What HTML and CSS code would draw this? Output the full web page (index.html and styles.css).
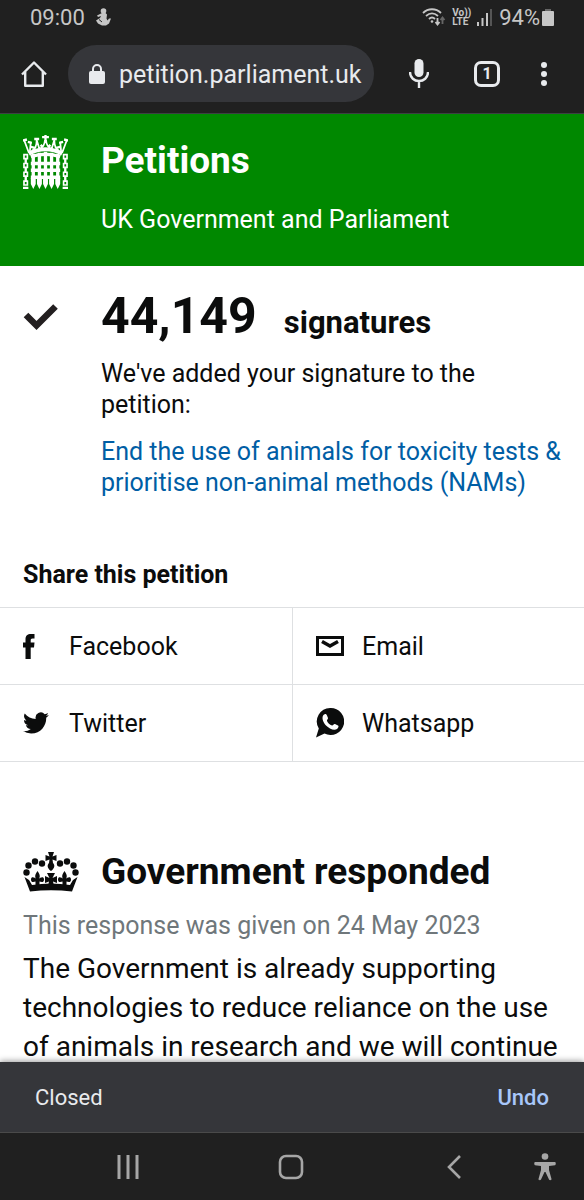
FILE: index.html
```html
<!DOCTYPE html>
<html lang="en-GB">

<head>
    <meta charset="UTF-8" />
    <meta name="viewport" content="width=device-width, initial-scale=1.0" />
    <title>Petitions - UK Government and Parliament</title>
    <link rel="stylesheet" href="styles.css">
</head>

<body>
    <!-- Status bar -->
    <div class="status-bar">
        <span class="clock">09:00</span>
        <svg width="16" height="18" viewBox="0 0 16 18" fill="#c6c6c6">
            <circle cx="8.500" cy="3" r="2.800" />
            <path d="M7 5L2 7.500l1 1.500 3-1-1 2-4 2.500 2 3 4 2h4l3-2 2-5h-2l-1.500 2-1-2 .5-4-2-2z" />
            <path d="M4 11.500l3 2.500" stroke="#202020" />
        </svg>
        <div class="status-icons">
            <svg width="24" height="18" viewBox="0 0 24 18" fill="none" stroke="#c6c6c6" stroke-width="1.800">
                <path d="M1 5c5-5 13-5 18 0M4 8c4-3.500 8-3.500 12 0M7 11c2-2 4-2 6 0" />
                <circle cx="10" cy="13.500" r="1.300" fill="#c6c6c6" stroke="none" />
                <path d="M15.500 10v6M13.500 14l2 2.500 2-2.500" />
                <path d="M20.500 16v-6M18.500 12l2-2.500 2 2.500" stroke="#666" />
            </svg>
            <span class="volte">Vo))<br>LTE</span>
            <svg width="16" height="17" viewBox="0 0 16 17" fill="#c6c6c6">
                <path d="M0 13h2v4H0zM4.500 9h2v8h-2zM9 4h2v13H9z" />
                <path d="M13 0h2v17h-2z" fill="#555" />
            </svg>
            <span class="battery-text">94%</span>
            <svg width="12" height="17" viewBox="0 0 12 17" fill="#c6c6c6">
                <path d="M3 0h6v2H3z" fill="#666" />
                <rect y="2" width="12" height="15" rx="1" />
            </svg>
        </div>
    </div>

    <!-- Browser toolbar -->
    <div class="toolbar">
        <button type="button" class="icon-button" aria-label="Home">
            <svg width="26" height="26" viewBox="0 0 26 26" fill="none" stroke="#e8eaed" stroke-width="2.400" stroke-linejoin="round">
                <path d="M1 13.500L13 1.500l12 12M4.200 11v13.800h17.600V11" />
            </svg>
        </button>
        <div class="address">
            <svg width="16" height="20" viewBox="0 0 16 20">
                <rect y="7" width="16" height="13" rx="2" fill="#e8eaed" />
                <path d="M4 8V5a4 4 0 0 1 8 0v3" fill="none" stroke="#e8eaed" stroke-width="2" />
            </svg>
            <input type="text" class="address-input" aria-label="Address" value="petition.parliament.uk">
        </div>
        <button type="button" class="icon-button" aria-label="Voice search">
            <svg width="20" height="29" viewBox="0 0 20 29">
                <rect x="5.500" width="9" height="18" rx="4.500" fill="#e8eaed" />
                <path d="M1 13c0 12 18 12 18 0M10 22v7" fill="none" stroke="#e8eaed" stroke-width="2.400" />
            </svg>
        </button>
        <button type="button" class="icon-button tab-count" aria-label="Tabs">1</button>
        <button type="button" class="icon-button" aria-label="Menu">
            <svg width="6" height="24" viewBox="0 0 6 24" fill="#e8eaed">
                <circle cx="3" cy="3" r="3" />
                <circle cx="3" cy="12" r="3" />
                <circle cx="3" cy="21" r="3" />
            </svg>
        </button>
    </div>

    <div class="page">
        <!-- Site header -->
        <header class="site-header">
            <svg width="45" height="55" viewBox="0 0 46 56" fill="none" stroke="#fff">
                <!-- crown -->
                <path d="M6 19Q23 10 40 19" stroke-width="4" />
                <path d="M6 18L1.500 6M7 17l1-10M9 16Q14 14 14 5M17 15L14 5M17 14Q22 12 22.500 5M29 14Q24 12 23.500 5M29 15L32 5M37 16Q32 14 32 5M39 17L38 7M40 18l4.500-12" stroke-width="1.800" />
                <path d="M19.500 2h7M23 0v7M11.500 4h5M29.500 4h5M0 5.500l4-1M46 5.500l-4-1M5 7l4 1M41 7l-4 1" stroke-width="2.400" />
                <path d="M8 12l4 1M18 10l2 2M26 12l2-2M34 13l4-1" stroke-width="2.500" />
                <!-- gate -->
                <path d="M8 22Q23 17 38 22M8 29h30M8 36h30M8 43h30" stroke-width="3.600" />
                <path d="M10.500 19v29M16.800 18v30M23 17v31M29.200 18v30M35.500 19v29" stroke-width="3.400" />
                <path d="M8 44h5v6l-2.500 5L8 50zM14.300 44h5v6l-2.500 5-2.500-5zM20.500 44h5v6L23 55l-2.500-5zM26.700 44h5v6l-2.500 5-2.500-5zM33 44h5v6l-2.500 5-2.500-5z" fill="#fff" stroke="none" />
                <!-- chains -->
                <path d="M1 20h3.500v4H1zM1 29h3.500v4H1zM1 38h3.500v4H1zM1 47h3.500v4H1zM41.500 20H45v4h-3.500zM41.500 29H45v4h-3.500zM41.500 38H45v4h-3.500zM41.500 47H45v4h-3.500z" stroke-width="1.700" />
                <path d="M2.800 24v5M2.800 33v5M2.800 42v5M43.200 24v5M43.200 33v5M43.200 42v5" stroke-width="2.400" />
                <path d="M0 54h5.500M40.500 54H46" stroke-width="2.400" />
            </svg>
            <div>
                <h1>Petitions</h1>
                <p class="tagline">UK Government and Parliament</p>
            </div>
        </header>

        <!-- Signature confirmation -->
        <section class="signed">
            <svg class="tick" width="36" height="28" viewBox="0 0 36 28">
                <path d="M3 12l10.500 10.500L32.500 3.500" fill="none" stroke="#231f20" stroke-width="6.500" />
            </svg>
            <div>
                <h2 class="count"><span class="count-number">44,149</span> <span>signatures</span></h2>
                <p>We've added your signature to the petition:</p>
                <p class="petition-link"><a href="#">End the use of animals for toxicity tests &amp; prioritise non-animal methods (NAMs)</a></p>
            </div>
        </section>

        <!-- Share links -->
        <section class="share">
            <h2>Share this petition</h2>
            <ul class="share-list">
                <li><a href="#">
                    <svg width="28" height="28" viewBox="0 0 28 28" fill="#0b0c0c">
                        <path d="M2.500 27V15.500H0v-5h2.500V7.500C2.500 3.500 4.500 2 8 2h3.500v4.500H9.500c-1.500 0-1.800.8-1.800 2v2h3.800l-.5 5H7.700V27z" />
                    </svg>
                    Facebook
                </a></li>
                <li><a href="#">
                    <svg width="28" height="28" viewBox="0 0 28 28" fill="none" stroke="#0b0c0c" stroke-width="3">
                        <path d="M1.500 5.500h25v17h-25z" />
                        <path d="M6 9.500l8 4.500 8-4.500" stroke-width="3.500" />
                    </svg>
                    Email
                </a></li>
                <li><a href="#">
                    <svg width="28" height="28" viewBox="0 0 26 26" fill="#0b0c0c">
                        <path d="M23.950 5.570a10 10 0 0 1-2.820.770 4.960 4.960 0 0 0 2.160-2.720 10 10 0 0 1-3.130 1.180 4.920 4.920 0 0 0-8.380 4.480C7.690 9.100 4.070 7.130 1.640 4.160a4.920 4.920 0 0 0 1.520 6.570 4.900 4.900 0 0 1-2.230-.610v.060a4.920 4.920 0 0 0 3.950 4.830 5 5 0 0 1-2.210.080 4.940 4.940 0 0 0 4.600 3.420A9.870 9.870 0 0 1 0 20.540a14 14 0 0 0 7.550 2.210c9.050 0 14-7.500 14-13.980 0-.210 0-.420-.020-.630a9.940 9.940 0 0 0 2.460-2.550z" />
                    </svg>
                    Twitter
                </a></li>
                <li><a href="#">
                    <svg width="28" height="30" viewBox="0 0 28 30">
                        <path d="M14.500 0a13.500 13.500 0 1 1-6 25.500L0 29.500l2.800-9A13.500 13.500 0 0 1 14.500 0z" fill="#0b0c0c" />
                        <path d="M8 6.500c1.500-1 2.500-.5 3 1l1 2.500c.3 1-1.500 2-1 3 1 2 2.500 3.500 5 4.500 1 .3 1.800-2 3-1.500l3 1.500c1 .5.500 2.500-1 3.500-3 2-8-.5-11-3.500S5 9 8 6.500z" fill="#fff" />
                    </svg>
                    Whatsapp
                </a></li>
            </ul>
        </section>

        <!-- Government response -->
        <section class="response">
            <div class="response-title">
                <svg width="56" height="40" viewBox="0 0 56 40" fill="#0b0c0c">
                    <circle cx="3.500" cy="20.500" r="3.200" />
                    <circle cx="5.500" cy="13.500" r="3.200" />
                    <circle cx="12" cy="9.500" r="3.200" />
                    <circle cx="19" cy="11.500" r="3.200" />
                    <circle cx="37" cy="11.500" r="3.200" />
                    <circle cx="44" cy="9.500" r="3.200" />
                    <circle cx="50.500" cy="13.500" r="3.200" />
                    <circle cx="52.500" cy="20.500" r="3.200" />
                    <!-- top cross and drop -->
                    <path d="M25 0h6l-1.500 4.500 4-1.500v6l-4-1.500.5 3.500c2 2 2 5-2 8-4-3-4-6-2-8l.5-3.500-4 1.500V3l4 1.500z" />
                    <!-- side fleurs and centre cross -->
                    <path d="M14.500 19c3 4 2.500 6 1.500 8 1-1.500 5-3 5 .5s-3 2.500-4.500 2V34h-4v-4.500C11 30 8 31 8 27.500s4-2 5-.5c-1-2-1.500-4 1.500-8z" />
                    <path d="M41.500 19c-3 4-2.500 6-1.500 8-1-1.500-5-3-5 .5s3 2.500 4.500 2V34h4v-4.500c1.500.5 4.500 1.500 4.500-2s-4-2-5-.5c1-2 1.500-4-1.500-8z" />
                    <path d="M24 21h8l-2.500 5 4.500-2v7l-4-1.500L31 34h-6l1-4.500L22 31v-7l4.500 2z" />
                    <!-- band -->
                    <path d="M1.500 25l4.500 3 3 5q19-3 38 0l3-5 4.500-3L49 39.500q-21-2.500-42 0z" />
                </svg>
                <h2>Government responded</h2>
            </div>
            <p class="response-date">This response was given on 24 May 2023</p>
            <p class="response-text">The Government is already supporting technologies to reduce reliance on the use of animals in research and we will continue</p>
        </section>
    </div>

    <div class="bottom">
        <!-- Snackbar -->
        <div class="snackbar" role="status">
            <span>Closed</span>
            <button type="button" class="undo">Undo</button>
        </div>

        <!-- Android navigation -->
        <nav class="nav-bar">
            <button type="button" class="icon-button" aria-label="Recent apps">
                <svg width="24" height="24" viewBox="0 0 24 24" fill="none" stroke="#a6a6a6" stroke-width="3">
                    <path d="M3 0v24M12 0v24M21 0v24" />
                </svg>
            </button>
            <button type="button" class="icon-button" aria-label="Home screen">
                <svg width="26" height="26" viewBox="0 0 26 26" fill="none" stroke="#a6a6a6" stroke-width="2.600">
                    <rect x="2" y="2" width="22" height="22" rx="6" />
                </svg>
            </button>
            <button type="button" class="icon-button" aria-label="Back">
                <svg width="14" height="24" viewBox="0 0 14 24" fill="none" stroke="#a6a6a6" stroke-width="2.600">
                    <path d="M13 1L2 12l11 11" />
                </svg>
            </button>
            <button type="button" class="icon-button accessibility" aria-label="Accessibility">
                <svg width="22" height="28" viewBox="0 0 22 28" fill="#a6a6a6">
                    <circle cx="11" cy="3.500" r="3.300" />
                    <path d="M1 9h20c1 0 1 3 0 3.200L15 13v4l2.500 9c0 1.500-2 1.500-2.500.5L11.500 19h-1L7 26.500c-.5 1-2.500 1-2.500-.5L7 17v-4l-6-.8C0 12 0 9 1 9z" />
                </svg>
            </button>
        </nav>
    </div>
</body>

</html>
```

FILE: styles.css
```css
/* Base */
* {
    box-sizing: border-box;
}

body {
    display: flex;
    flex-direction: column;
    min-height: 100vh;
    margin: 0;
    background: #fff;
    color: #0b0c0c;
    font-family: Roboto, "Liberation Sans", sans-serif;
    font-size: 25px;
    line-height: 31px;
}

h1,
h2,
p,
ul {
    margin: 0;
    padding: 0;
}

button {
    font-family: inherit;
}

svg {
    display: block;
    flex: none;
}

/* Status bar */
.status-bar {
    display: flex;
    align-items: center;
    gap: 10px;
    flex: none;
    height: 34px;
    padding: 0 30px;
    background: #202020;
    color: #c6c6c6;
    font-size: 22px;
}

.status-icons {
    display: flex;
    align-items: center;
    gap: 6px;
    margin-left: auto;
}

.volte {
    font-size: 10px;
    font-weight: bold;
    line-height: 9px;
}

.battery-text {
    margin-right: -4px;
}

/* Browser toolbar */
.toolbar {
    display: flex;
    align-items: center;
    flex: none;
    height: 80px;
    padding: 0 20px 0 14px;
    border-bottom: 1px solid #3c4043;
    background: #202020;
}

.icon-button {
    display: flex;
    align-items: center;
    justify-content: center;
    width: 40px;
    height: 40px;
    padding: 0;
    border: none;
    background: none;
    color: #e8eaed;
    cursor: pointer;
}

.address {
    display: flex;
    align-items: center;
    flex: 1;
    gap: 14px;
    min-width: 0;
    height: 57px;
    margin: 0 25px 0 14px;
    padding: 0 8px 0 21px;
    border-radius: 29px;
    background: #35363a;
}

.address-input {
    flex: 1;
    min-width: 0;
    height: 40px;
    padding: 2px 0 0;
    border: none;
    background: none;
    color: #e8eaed;
    font-family: inherit;
    font-size: 25px;
}

.tab-count {
    width: 26px;
    height: 26px;
    margin: 0 24px 0 35px;
    border: 3px solid #e8eaed;
    border-radius: 7px;
    font-size: 16px;
    font-weight: bold;
}

/* Page content, its last line may run on under the snackbar */
.page {
    flex: 1 0 auto;
    margin-bottom: -16px;
}

.site-header,
.signed,
.response-title {
    display: grid;
    grid-template-columns: 56px 1fr;
    column-gap: 22px;
}

.site-header {
    padding: 21px 20px 31px 23px;
    background: #008800;
    color: #fff;
}

h1,
.response h2 {
    font-size: 37px;
    line-height: 52px;
}

.tagline {
    margin-top: 17px;
}

/* Signature confirmation */
.signed {
    padding: 19px 20px 0 23px;
}

.tick {
    margin-top: 18px;
}

.count {
    display: flex;
    align-items: baseline;
    gap: 27px;
    font-size: 31px;
    line-height: 62px;
}

.count-number {
    font-size: 50px;
}

.signed p {
    margin-top: 4px;
}

.signed .petition-link {
    margin-top: 16px;
}

.signed a {
    color: #005ea5;
    text-decoration: none;
}

/* Share links */
.share {
    padding-top: 61px;
}

.share h2 {
    margin: 0 23px 17px;
    font-size: 25px;
}

.share-list {
    display: grid;
    grid-template-columns: 1fr 1fr;
    border-top: 1px solid #dee0e2;
    list-style: none;
}

.share-list li {
    border-bottom: 1px solid #dee0e2;
}

.share-list li:nth-child(even) {
    border-left: 1px solid #dee0e2;
}

.share-list a {
    display: flex;
    align-items: center;
    gap: 18px;
    height: 76px;
    padding: 0 23px;
    color: #0b0c0c;
    text-decoration: none;
}

/* Government response */
.response {
    padding: 84px 20px 0 23px;
}

.response-title {
    align-items: center;
}

.response-date {
    margin-top: 12px;
    color: #6f777b;
}

.response-text {
    margin-top: 8px;
    font-size: 28px;
    line-height: 39px;
}

/* Snackbar and navigation stay at the bottom of the window */
.bottom {
    position: sticky;
    bottom: 0;
}

.snackbar {
    display: flex;
    align-items: center;
    justify-content: space-between;
    height: 71px;
    padding: 0 35px;
    border-bottom: 1px solid #4a4a4a;
    background: #35363a;
    box-shadow: 0 -1px 6px rgba(0, 0, 0, 0.4);
    color: #e8eaed;
    font-size: 22px;
}

.undo {
    padding: 0;
    border: none;
    background: none;
    color: #a8c7fa;
    font-size: 22px;
    font-weight: 500;
    cursor: pointer;
}

/* Android navigation */
.nav-bar {
    display: flex;
    align-items: center;
    justify-content: space-between;
    height: 67px;
    padding: 0 19px 0 108px;
    background: #202020;
}

.accessibility {
    margin-left: -72px;
}
```
